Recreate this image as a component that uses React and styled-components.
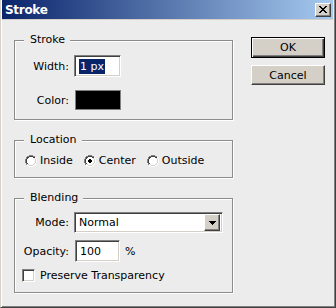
import React from "react";
import styled, { createGlobalStyle, css } from "styled-components";

const Global = createGlobalStyle`
  html, body { margin: 0; padding: 0; background: #ececec; }
  body { font-family: "DejaVu Sans", Tahoma, sans-serif; font-size: 11px; color: #000; }
`;

const Window = styled.div`
  width: 336px;
  height: 308px;
  box-sizing: border-box;
  display: flex;
  flex-direction: column;
  background: #ececec;
  border-left: 1px solid #d4d0c8;
  border-right: 1px solid #404040;
  border-bottom: 1px solid #404040;
  box-shadow: inset 1px 0 0 #ffffff, inset -1px -1px 0 #808080;
  padding: 0 2px 2px 1px;
`;

const TitleBar = styled.div`
  height: 19px;
  flex: none;
  display: flex;
  align-items: center;
  justify-content: space-between;
  padding: 0 2px 0 3px;
  background: linear-gradient(to right, #0a246a, #a6caf0);
  border-bottom: 1px solid #d4d0c8;
`;

const Title = styled.span`
  color: #fff;
  font-weight: bold;
  font-size: 12px;
  letter-spacing: -0.3px;
`;

const raised = css`
  background: #d4d0c8;
  border: 1px solid;
  border-color: #ffffff #404040 #404040 #ffffff;
  box-shadow: inset -1px -1px 0 #808080, inset 1px 1px 0 #d4d0c8;
  box-sizing: border-box;
`;

const sunken = css`
  border: 1px solid;
  border-color: #808080 #ffffff #ffffff #808080;
  box-shadow: inset 1px 1px 0 #404040, inset -1px -1px 0 #d4d0c8;
  box-sizing: border-box;
`;

const CloseButton = styled.div`
  ${raised};
  width: 16px;
  height: 14px;
  display: flex;
  align-items: center;
  justify-content: center;
`;

const Body = styled.div`
  display: flex;
  align-items: flex-start;
  gap: 18px;
  padding: 17px 0 0 12px;
`;

const Groups = styled.div`
  display: flex;
  flex-direction: column;
  gap: 20px;
  width: 219px;
  margin-top: 3px;
`;

const Group = styled.div`
  position: relative;
  box-sizing: border-box;
  height: ${(p) => p.$h}px;
  border: 1px solid #8c8c8c;
  box-shadow: 1px 1px 0 #ffffff, inset 1px 1px 0 #ffffff;
  padding: ${(p) => p.$pad};
`;

const Legend = styled.span`
  position: absolute;
  top: -8px;
  left: 9px;
  padding: 0 5px 0 6px;
  background: #ececec;
  line-height: 14px;
`;

const FieldGrid = styled.div`
  display: grid;
  grid-template-columns: 54px auto;
  column-gap: 5px;
  row-gap: ${(p) => p.$gap}px;
  align-items: center;
  justify-items: start;
`;

const Label = styled.span`
  justify-self: end;
`;

const TextBox = styled.div`
  ${sunken};
  background: #fff;
  width: ${(p) => p.$w}px;
  height: 22px;
  display: flex;
  align-items: center;
  padding-left: ${(p) => p.$pl}px;
  margin-left: ${(p) => p.$ml || 0}px;
`;

const Selected = styled.span`
  background: #0a246a;
  color: #fff;
  padding: 1px 1px;
  line-height: 13px;
`;

const Swatch = styled.div`
  width: 46px;
  height: 20px;
  box-sizing: border-box;
  border: 1px solid #808080;
  background: #000;
  margin-left: 1px;
`;

const RadioRow = styled.div`
  display: flex;
  align-items: center;
  gap: 11px;
`;

const RadioOption = styled.label`
  display: flex;
  align-items: center;
  gap: 3px;
`;

const Select = styled.div`
  ${sunken};
  background: #fff;
  width: 149px;
  height: 21px;
  display: flex;
  align-items: center;
  justify-content: space-between;
  padding: 2px 2px 2px 4px;
`;

const SelectButton = styled.div`
  ${raised};
  width: 16px;
  height: 17px;
  display: flex;
  align-items: center;
  justify-content: center;
`;

const Inline = styled.div`
  display: flex;
  align-items: center;
  gap: 5px;
`;

const CheckRow = styled.label`
  grid-column: 1 / span 2;
  display: flex;
  align-items: center;
  gap: 5px;
  padding-left: 7px;
`;

const CheckBox = styled.div`
  ${sunken};
  background: #fff;
  width: 13px;
  height: 13px;
`;

const Buttons = styled.div`
  display: flex;
  flex-direction: column;
  gap: 7px;
`;

const Button = styled.div`
  ${raised};
  width: 74px;
  height: ${(p) => (p.$default ? 21 : 20)}px;
  display: flex;
  align-items: center;
  justify-content: center;
  ${(p) =>
    p.$default &&
    css`
      border-color: #000;
      box-shadow: inset 1px 1px 0 #fff, inset -1px -1px 0 #404040, inset -2px -2px 0 #808080;
    `}
`;

const Radio = ({ checked }) => (
  <svg width="12" height="12" viewBox="0 0 12 12">
    <path d="M4 0h4v1h-4zM2 1h2v1h-2zM8 1h2v1h-2zM1 2h1v2h-1zM0 4h1v4h-1zM1 8h1v2h-1z" fill="#808080" />
    <path d="M4 1h4v1h-4zM2 2h2v1h-2zM8 2h2v1h-2zM2 3h1v1h-1zM1 4h1v4h-1zM2 8h1v1h-1z" fill="#404040" />
    <path d="M10 2h1v2h-1zM11 4h1v4h-1zM10 8h1v2h-1zM8 10h2v1h-2zM4 11h4v1h-4zM2 10h2v1h-2z" fill="#ffffff" />
    <path d="M9 3h1v1h-1zM10 4h1v4h-1zM9 8h1v1h-1zM8 9h1v1h-1zM4 10h4v1h-4zM3 9h1v1h-1z" fill="#d4d0c8" />
    <rect x="3" y="3" width="6" height="6" fill="#ffffff" />
    <rect x="4" y="2" width="4" height="8" fill="#ffffff" />
    <rect x="2" y="4" width="8" height="4" fill="#ffffff" />
    {checked && <path d="M5 4h2v1h1v2h-1v1h-2v-1h-1v-2h1z" fill="#000" />}
  </svg>
);

export default function App() {
  return (
    <>
      <Global />
      <Window>
        <TitleBar>
          <Title>Stroke</Title>
          <CloseButton>
            <svg width="8" height="7" viewBox="0 0 8 7">
              <path d="M0 0h2v1h1v1h2v-1h1v-1h2v1h-1v1h-1v1h-1v1h1v1h1v1h1v1h-2v-1h-1v-1h-2v1h-1v1h-2v-1h1v-1h1v-1h1v-1h-1v-1h-1v-1h-1z" fill="#000" />
            </svg>
          </CloseButton>
        </TitleBar>
        <Body>
          <Groups>
            <Group $h={80} $pad="14px 0 0 0">
              <Legend>Stroke</Legend>
              <FieldGrid $gap={13}>
                <Label>Width:</Label>
                <TextBox $w={47} $pl={4}>
                  <Selected>1 px</Selected>
                </TextBox>
                <Label>Color:</Label>
                <Swatch />
              </FieldGrid>
            </Group>
            <Group $h={38} $pad="13px 0 0 10px">
              <Legend>Location</Legend>
              <RadioRow>
                <RadioOption>
                  <Radio />
                  Inside
                </RadioOption>
                <RadioOption>
                  <Radio checked />
                  Center
                </RadioOption>
                <RadioOption>
                  <Radio />
                  Outside
                </RadioOption>
              </RadioRow>
            </Group>
            <Group $h={95} $pad="13px 0 0 0">
              <Legend>Blending</Legend>
              <FieldGrid $gap={7}>
                <Label>Mode:</Label>
                <Select>
                  <span>Normal</span>
                  <SelectButton>
                    <svg width="7" height="4" viewBox="0 0 7 4">
                      <path d="M0 0h7v1h-1v1h-1v1h-1v1h-1v-1h-1v-1h-1v-1h-1z" fill="#000" />
                    </svg>
                  </SelectButton>
                </Select>
                <Label>Opacity:</Label>
                <Inline>
                  <TextBox $w={45} $pl={4} $ml={1}>100</TextBox>
                  <span>%</span>
                </Inline>
                <CheckRow>
                  <CheckBox />
                  Preserve Transparency
                </CheckRow>
              </FieldGrid>
            </Group>
          </Groups>
          <Buttons>
            <Button $default>OK</Button>
            <Button>Cancel</Button>
          </Buttons>
        </Body>
      </Window>
    </>
  );
}
